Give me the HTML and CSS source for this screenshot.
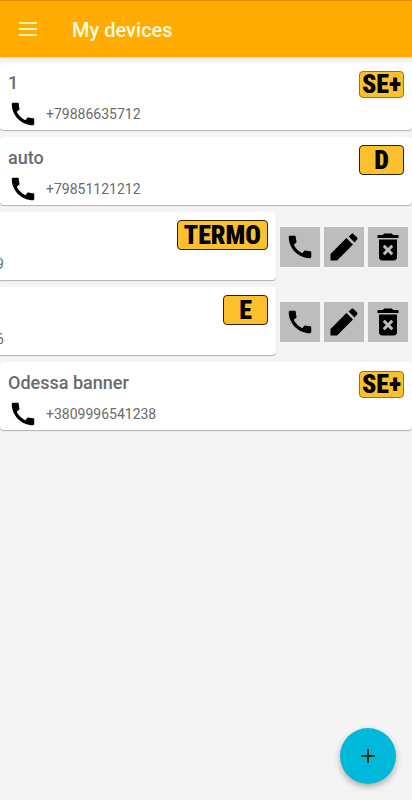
FILE: index.html
```html
<!DOCTYPE html>
<html lang="en">
<head>
<meta charset="utf-8">
<meta name="viewport" content="width=device-width, initial-scale=1">
<title>My devices</title>
<link rel="stylesheet" href="styles.css">
</head>
<body>
<svg class="sprite" aria-hidden="true">
  <symbol id="call" viewBox="0 0 24 24"><path d="M20.01 15.38c-1.23 0-2.42-.2-3.53-.56-.35-.12-.74-.03-1.01.24l-1.57 1.97c-2.83-1.35-5.48-3.9-6.89-6.83l1.95-1.66c.27-.28.35-.67.24-1.02-.37-1.11-.56-2.3-.56-3.53 0-.54-.45-.99-.99-.99H4.19C3.65 3 3 3.24 3 3.99 3 13.28 10.73 21 20.01 21c.71 0 .99-.63.99-1.18v-3.45c0-.54-.45-.99-.99-.99z"/></symbol>
  <symbol id="edit" viewBox="0 0 24 24"><path d="M3 16.6V21h4.4L18 10.4 13.6 6 3 16.6zM20.71 7.04c.39-.39.39-1.02 0-1.41l-2.34-2.34c-.39-.39-1.02-.39-1.41 0l-1.9 1.7 3.95 3.95 1.7-1.9z"/></symbol>
  <symbol id="delete" viewBox="0 0 24 24"><path d="M6 19c0 1.1.9 2 2 2h8c1.1 0 2-.9 2-2V7H6v12zm2.46-7.12l1.41-1.41L12 12.59l2.12-2.12 1.41 1.41L13.41 14l2.12 2.12-1.41 1.41L12 15.41l-2.12 2.12-1.41-1.41L10.59 14l-2.13-2.12zM15.5 4l-1-1h-5l-1 1H5v2h14V4z"/></symbol>
</svg>
<header class="bar">
  <button class="menu" aria-label="Menu"><svg viewBox="0 0 24 24"><path d="M3 4h18v2H3zM3 10h18v2H3zM3 16h18v2H3z"/></svg></button>
  <h1>My devices</h1>
</header>
<main>
  <ul class="devices">
    <li class="row">
      <article class="card">
        <div class="info"><h2>1</h2><p class="phone"><svg class="icon"><use href="#call"/></svg>+79886635712</p></div>
        <span class="badge small">SE+</span>
      </article>
    </li>
    <li class="row">
      <article class="card">
        <div class="info"><h2>auto</h2><p class="phone"><svg class="icon"><use href="#call"/></svg>+79851121212</p></div>
        <span class="badge">D</span>
      </article>
    </li>
    <li class="row">
      <article class="card swiped">
        <p class="phone">9</p>
        <span class="badge">TERMO</span>
      </article>
      <div class="actions">
        <button aria-label="Call"><svg class="icon"><use href="#call"/></svg></button>
        <button aria-label="Edit"><svg class="icon large"><use href="#edit"/></svg></button>
        <button aria-label="Delete"><svg class="icon large"><use href="#delete"/></svg></button>
      </div>
    </li>
    <li class="row">
      <article class="card swiped">
        <p class="phone">6</p>
        <span class="badge">E</span>
      </article>
      <div class="actions">
        <button aria-label="Call"><svg class="icon"><use href="#call"/></svg></button>
        <button aria-label="Edit"><svg class="icon large"><use href="#edit"/></svg></button>
        <button aria-label="Delete"><svg class="icon large"><use href="#delete"/></svg></button>
      </div>
    </li>
    <li class="row">
      <article class="card">
        <div class="info"><h2>Odessa banner</h2><p class="phone"><svg class="icon"><use href="#call"/></svg>+3809996541238</p></div>
        <span class="badge small">SE+</span>
      </article>
    </li>
  </ul>
</main>
<button class="fab" aria-label="Add device"><svg viewBox="0 0 16 16"><path d="M8 1v14M1 8h14"/></svg></button>
</body>
</html>
```

FILE: styles.css
```css
* { box-sizing: border-box; }

body {
  margin: 0;
  min-height: 100vh;
  background: #f4f4f4;
  color: #6b6b6b;
  font-family: Roboto, "Liberation Sans", sans-serif;
}

h1, h2, p, ul { margin: 0; padding: 0; }

button {
  display: flex;
  align-items: center;
  justify-content: center;
  padding: 0;
  border: 0;
  cursor: pointer;
}

.sprite { display: none; }

.bar {
  display: flex;
  align-items: center;
  gap: 32px;
  height: 57px;
  padding: 2px 16px 0;
  border-top: 1px solid #e08e00;
  background: #ffab00;
  box-shadow: 0 1px 2px rgba(0, 0, 0, 0.15);
  color: #fffbe0;
}

.bar h1 {
  font-size: 20px;
  font-weight: 500;
  line-height: 24px;
}

.menu {
  width: 24px;
  height: 24px;
  background: none;
}

.menu svg {
  width: 24px;
  height: 24px;
  fill: #fff8b8;
}

.devices {
  display: flex;
  flex-direction: column;
  gap: 7px;
  padding-top: 5px;
  list-style: none;
}

.row {
  display: flex;
  align-items: center;
}

.card {
  display: flex;
  flex: 1;
  align-items: flex-start;
  justify-content: space-between;
  min-height: 68px;
  padding: 8px;
  border-radius: 4px;
  background: #fff;
  box-shadow: 0 1px 1px rgba(0, 0, 0, 0.28);
}

.info h2 {
  padding-top: 2px;
  font-size: 18px;
  font-weight: 500;
  line-height: 22px;
}

.phone {
  display: flex;
  align-items: center;
  gap: 8px;
  height: 40px;
  font-size: 14px;
  line-height: 20px;
}

.info .phone { margin-bottom: -12px; }

.icon {
  width: 30px;
  height: 30px;
  fill: #000;
}

.icon.large {
  width: 36px;
  height: 36px;
}

/* A swiped card is pushed past the left edge to reveal its actions. */
.swiped {
  padding-left: 0;
  border-radius: 0 4px 4px 0;
}

.swiped .phone {
  align-self: flex-end;
  margin: 0 0 -12px -4px;
}

.badge {
  display: flex;
  align-items: center;
  justify-content: center;
  min-width: 45px;
  height: 30px;
  padding: 0 6px;
  border: 1px solid #2b2208;
  border-radius: 4px;
  background: #fcc02e;
  color: #000;
  font-family: "Liberation Sans Narrow", "Roboto Condensed", "Liberation Sans", sans-serif;
  font-size: 26px;
  font-weight: 900;
  line-height: 30px;
}

.badge.small {
  height: 27px;
  margin-top: 1px;
  padding: 0 1px;
  border-color: #8d7433;
  line-height: 27px;
}

.actions {
  display: flex;
  gap: 4px;
  padding: 2px 4px 0;
}

.actions button {
  width: 40px;
  height: 40px;
  background: #bdbdbd;
}

.fab {
  position: fixed;
  right: 16px;
  bottom: 16px;
  width: 56px;
  height: 56px;
  border-radius: 50%;
  background: #00b8d9;
  box-shadow: 0 3px 6px rgba(0, 0, 0, 0.3);
}

.fab svg {
  width: 16px;
  height: 16px;
  fill: none;
  stroke: #0a3d1c;
  stroke-width: 2;
}
```
